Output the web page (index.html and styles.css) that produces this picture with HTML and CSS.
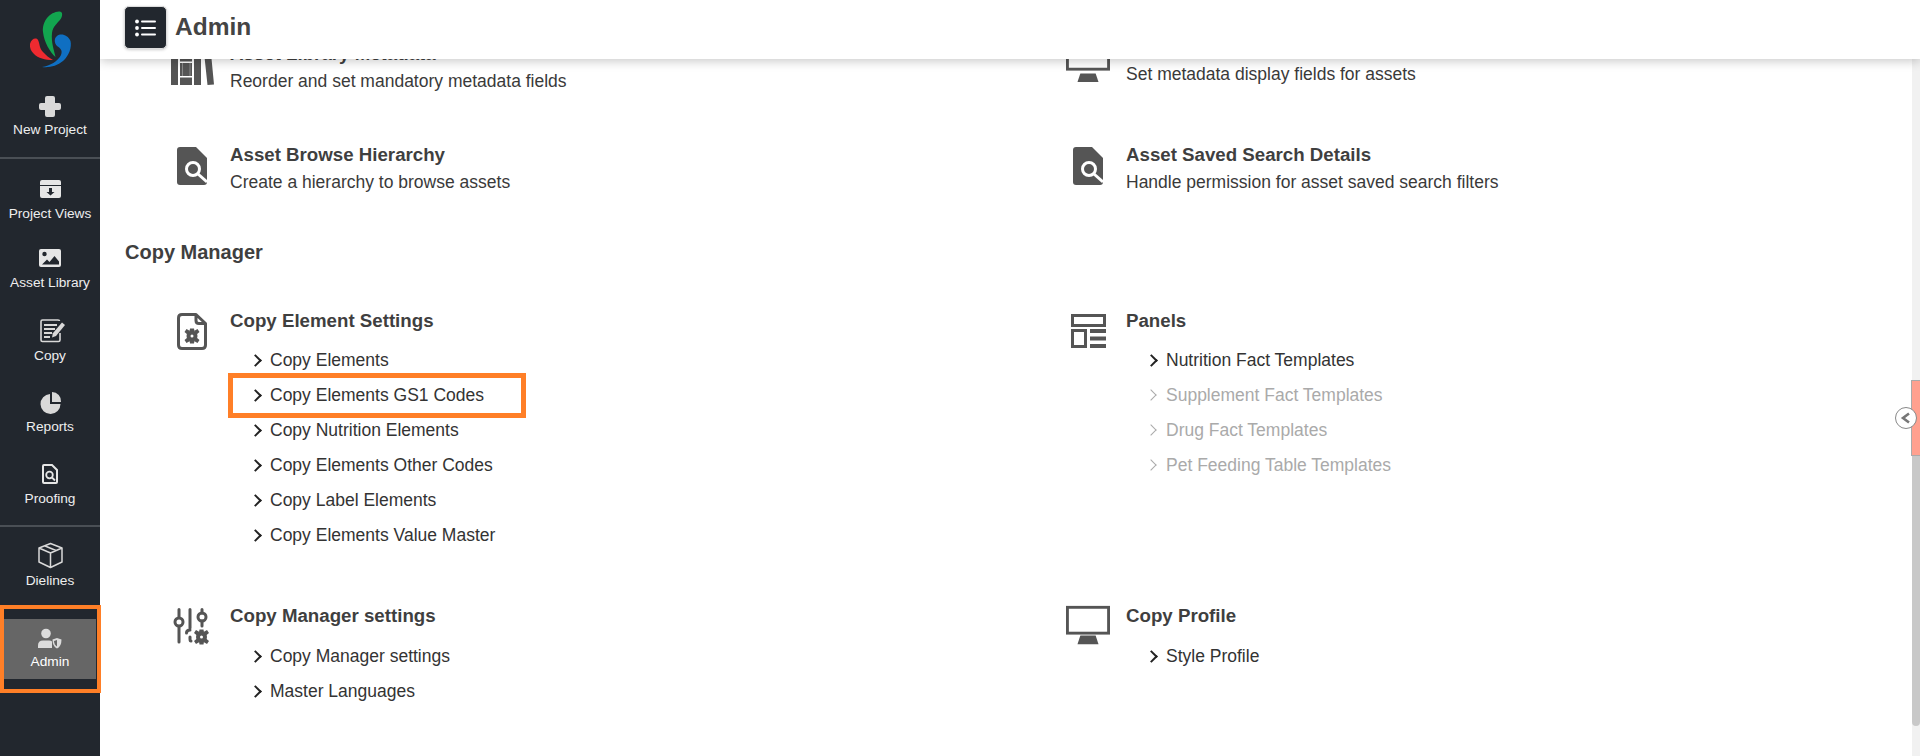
FILE: index.html
```html
<!DOCTYPE html>
<html lang="en">
<head>
<meta charset="utf-8">
<title>Admin</title>
<link rel="stylesheet" href="styles.css">
</head>
<body>
<div class="app">
  <aside class="sidebar">
    <div class="logo">
      <svg width="100" height="80" viewBox="0 0 100 80">
        <path fill="#12a54f" d="M59 11.500C62.500 11 63 15 61 18.500C57 24 53 26 52 33C51 42 54 50 55.500 57C50 52 44 42 43 32C42 21 50 12 59 11.500Z"/>
        <path fill="#ee2a30" d="M30 44C31 39 36 37 38 40C40 44 39 48 43 52C46 55 49 58 53 60C45 60 38 58 34 54C31 51 29.500 48 30 44Z"/>
        <path fill="#0f6fc2" d="M57 36C61 33 68 35 70.500 41C72 47 69 56 63 61C57 66 49 68 42 67C50 66 58 61 61 55C63 50 60 48 57 46C54 43 54 38 57 36Z"/>
      </svg>
    </div>
    <a class="nav nav-new">
      <svg class="nav-icon" viewBox="0 0 32 28"><path fill="#d9d9d9" d="M13 6h6q2 0 2 2v5h4q2 0 2 2v3q0 2-2 2h-4v5q0 2-2 2h-6q-2 0-2-2v-5H7q-2 0-2-2v-3q0-2 2-2h4V8q0-2 2-2z"/></svg>
      <span>New Project</span>
    </a>
    <div class="rule"></div>
    <a class="nav h69">
      <svg class="nav-icon" viewBox="0 0 32 28"><path fill="#e6e6e6" d="M8 6h17q2 0 2 2v3H6V8q0-2 2-2zM6 12h21v10q0 2-2 2H8q-2 0-2-2z"/><path fill="#22272e" d="M15 14h3v4h2.500l-4 3.500-4-3.500H15z"/></svg>
      <span>Project Views</span>
    </a>
    <a class="nav h69">
      <svg class="nav-icon" viewBox="0 0 32 28"><path fill="#e6e6e6" d="M7 6h18q2 0 2 2v14q0 2-2 2H7q-2 0-2-2V8q0-2 2-2z"/><circle cx="10.500" cy="11" r="2.200" fill="#22272e"/><path fill="#22272e" d="M8 21.500l5-5 2.500 2.500 5-6 4.500 5.500v3z"/></svg>
      <span>Asset Library</span>
    </a>
    <a class="nav h73">
      <svg class="nav-icon" viewBox="0 0 32 28"><path fill="none" stroke="#d9d9d9" stroke-width="1.600" d="M26 17v7q0 1.500-1.500 1.500H8.500Q7 25.500 7 24V5.500Q7 4 8.500 4H24q1.500 0 1.500 1"/><path stroke="#d9d9d9" stroke-width="1.800" d="M10 9h13M10 13h11M10 17h8M10 21h6"/><path fill="#d9d9d9" d="M28 6.500l3 2.500-9 11-4 1.500.8-4.200z"/></svg>
      <span>Copy</span>
    </a>
    <a class="nav h71">
      <svg class="nav-icon" viewBox="0 0 32 28"><path fill="#d9d9d9" d="M16 7v10h10.500a10 10 0 1 1-10.500-10z"/><path fill="#d9d9d9" d="M18 5a9 9 0 0 1 9 10h-9z"/></svg>
      <span>Reports</span>
    </a>
    <a class="nav h72">
      <svg class="nav-icon" viewBox="0 0 32 28"><path fill="none" stroke="#e6e6e6" stroke-width="2" d="M10 6h8l5 5v12q0 1-1 1H10q-1 0-1-1V7q0-1 1-1z"/><circle cx="15.500" cy="16" r="3.300" fill="none" stroke="#e6e6e6" stroke-width="1.800"/><path stroke="#e6e6e6" stroke-width="1.800" d="M18 18.500l3 3"/></svg>
      <span>Proofing</span>
    </a>
    <div class="rule rule-second"></div>
    <a class="nav h68">
      <svg class="nav-icon" viewBox="0 0 32 28"><path fill="none" stroke="#d9d9d9" stroke-width="1.500" stroke-linejoin="round" d="M16.500 2.500L28 7v14l-11.500 5.500L5 21V7zM5 7l11.500 5L28 7M16.500 12v14.500M10.500 4.800l11.500 4.700"/></svg>
      <span>Dielines</span>
    </a>
    <div class="admin-slot">
      <a class="nav nav-active">
        <svg class="nav-icon" viewBox="0 0 32 28"><circle cx="12" cy="10.500" r="4.800" fill="#dcdcdc"/><path fill="#dcdcdc" d="M4 25v-2.500q0-5 5-5h6q2 0 3 1v6.500z"/><path fill="#dcdcdc" d="M23 15l4.500 1.500q0 7-4.500 9q-4.500-2-4.500-9z"/><path fill="#666" d="M23 17v6.500q-2.800-1.500-3-5.500z"/></svg>
        <span>Admin</span>
      </a>
      <div class="mark mark-nav"></div>
    </div>
  </aside>

  <main class="main">
    <header class="topbar">
      <button class="menu-btn" type="button" aria-label="Menu">
        <svg width="22" height="18" viewBox="0 0 22 18"><g fill="#fff"><circle cx="2" cy="2.500" r="1.900"/><circle cx="2" cy="9" r="1.900"/><circle cx="2" cy="15.500" r="1.900"/><rect x="6" y="1.500" width="15" height="2" rx="1"/><rect x="6" y="8" width="15" height="2" rx="1"/><rect x="6" y="14.500" width="15" height="2" rx="1"/></g></svg>
      </button>
      <h1>Admin</h1>
    </header>

    <div class="content">
      <div class="grid grid-first">
        <section class="card card-book">
          <div class="card-icon">
            <svg width="44" height="44" viewBox="0 0 44 44"><path fill="#555" d="M1 2h7v42H1zM10 2h12v42H10zM24 2h7v42h-7zM33 2h7l4 41.500-6.500.5z"/><path fill="#fff" d="M10 20.500h12V22H10zM10 35h12v1.500H10z"/><path fill="#8a8a8a" d="M12 22h1v13h-1zM19.500 22h1v13h-1z"/></svg>
          </div>
          <div class="card-body">
            <h3>Asset Library Metadata</h3>
            <p>Reorder and set mandatory metadata fields</p>
          </div>
        </section>
        <section class="card card-book">
          <div class="card-icon">
            <svg width="46" height="42" viewBox="0 0 46 42"><rect x="1.500" y="1.500" width="43" height="27" fill="#fff" stroke="#555" stroke-width="3"/><path fill="#555" d="M12 42l3-9h16l3 9z"/></svg>
          </div>
          <div class="card-body card-body-up">
            <h3>Asset Display Metadata</h3>
            <p>Set metadata display fields for assets</p>
          </div>
        </section>
        <section class="card card-search">
          <div class="card-icon">
            <svg width="30" height="38" viewBox="0 0 30 38"><path fill="#555" d="M3 0h16l11 11v24q0 3-3 3H3q-3 0-3-3V3q0-3 3-3z"/><circle cx="16" cy="22" r="6.500" fill="none" stroke="#fff" stroke-width="3"/><path stroke="#fff" stroke-width="3" d="M21 27l9 8"/></svg>
          </div>
          <div class="card-body">
            <h3>Asset Browse Hierarchy</h3>
            <p>Create a hierarchy to browse assets</p>
          </div>
        </section>
        <section class="card card-search">
          <div class="card-icon">
            <svg width="30" height="38" viewBox="0 0 30 38"><path fill="#555" d="M3 0h16l11 11v24q0 3-3 3H3q-3 0-3-3V3q0-3 3-3z"/><circle cx="16" cy="22" r="6.500" fill="none" stroke="#fff" stroke-width="3"/><path stroke="#fff" stroke-width="3" d="M21 27l9 8"/></svg>
          </div>
          <div class="card-body">
            <h3>Asset Saved Search Details</h3>
            <p>Handle permission for asset saved search filters</p>
          </div>
        </section>
      </div>

      <h2>Copy Manager</h2>

      <div class="grid grid-copy">
        <section class="card card-tall">
          <div class="card-icon">
            <svg width="30" height="37" viewBox="0 0 30 37"><path fill="none" stroke="#555" stroke-width="3" stroke-linejoin="round" d="M5 1.500h14v6q0 3 3 3h6.500V32q0 3.500-3.500 3.500H5q-3.500 0-3.500-3.500V5q0-3.500 3.500-3.500zM19 1.500l9.500 9"/><g fill="#555"><circle cx="15" cy="23" r="5.500"/><path d="M13 15.500h4l.5 3h-5zM13 30.500h4l.5-3h-5zM7.500 19l2-3 3.500 2-2.500 3.500zM22.500 27l-2 3-3.500-2 2.500-3.500zM7.500 27l2 3 3.500-2-2.500-3.500zM22.500 19l-2-3-3.500 2 2.500 3.500z"/></g><circle cx="15" cy="23" r="1.500" fill="#fff"/></svg>
          </div>
          <div class="card-body">
            <h3>Copy Element Settings</h3>
            <ul>
              <li>Copy Elements</li>
              <li class="marked">Copy Elements GS1 Codes<div class="mark mark-link"></div></li>
              <li>Copy Nutrition Elements</li>
              <li>Copy Elements Other Codes</li>
              <li>Copy Label Elements</li>
              <li>Copy Elements Value Master</li>
            </ul>
          </div>
        </section>
        <section class="card card-tall">
          <div class="card-icon">
            <svg width="35" height="34" viewBox="0 0 35 34"><g fill="none" stroke="#555" stroke-width="3"><rect x="1.500" y="1.500" width="32" height="10"/><rect x="1.500" y="16.500" width="13" height="16"/></g><path fill="#555" d="M19 15h16v4H19zM19 22.500h16v4H19zM19 30h16v4H19z"/></svg>
          </div>
          <div class="card-body">
            <h3>Panels</h3>
            <ul>
              <li>Nutrition Fact Templates</li>
              <li class="off">Supplement Fact Templates</li>
              <li class="off">Drug Fact Templates</li>
              <li class="off">Pet Feeding Table Templates</li>
            </ul>
          </div>
        </section>
        <section class="card card-low">
          <div class="card-icon">
            <svg width="38" height="38" viewBox="0 0 38 38"><g fill="none" stroke="#555" stroke-width="3" stroke-linecap="round"><path d="M6 1.500v8M6 19v15"/><circle cx="6" cy="14" r="4"/><path d="M17 1.500V20M13.500 25q0-3 3.500-3M17 29v2q0 2 1 2"/><circle cx="29" cy="9" r="4"/><path d="M29 1.500V5M29 13v5"/></g><g fill="#555"><circle cx="28.500" cy="29" r="5.500"/><path d="M26.500 21.500h4l.5 3h-5zM26.500 36.500h4l.5-3h-5zM21 25l2-3 3.500 2-2.500 3.500zM36 33l-2 3-3.500-2 2.500-3.500zM21 33l2 3 3.500-2-2.500-3.500zM36 25l-2-3-3.500 2 2.500 3.500z"/></g><circle cx="28.500" cy="29" r="1.500" fill="#fff"/></svg>
          </div>
          <div class="card-body">
            <h3>Copy Manager settings</h3>
            <ul>
              <li>Copy Manager settings</li>
              <li>Master Languages</li>
            </ul>
          </div>
        </section>
        <section class="card card-low">
          <div class="card-icon">
            <svg width="46" height="41" viewBox="0 0 46 41"><rect x="1.500" y="1.500" width="43" height="27" fill="#fff" stroke="#555" stroke-width="3"/><path fill="#555" d="M12 40l3-9h16l3 9z"/></svg>
          </div>
          <div class="card-body">
            <h3>Copy Profile</h3>
            <ul>
              <li>Style Profile</li>
            </ul>
          </div>
        </section>
      </div>
    </div>

    <div class="scroll-track"><div class="scroll-thumb"></div></div>
    <div class="scroll-mark"></div>
    <button class="collapse" type="button" aria-label="Collapse">
      <svg width="12" height="12" viewBox="0 0 12 12"><path fill="none" stroke="#777" stroke-width="2.600" d="M9 1.500L3 6l6 4.500"/></svg>
    </button>
  </main>
</div>
</body>
</html>
```
FILE: styles.css
```css
* { box-sizing: border-box; }
html, body { margin: 0; height: 100%; overflow: hidden; }
body { font-family: "Liberation Sans", Arial, sans-serif; color: #333; background: #fff; }
.app { display: flex; height: 100vh; }

/* sidebar */
.sidebar { width: 100px; flex: none; background: #22272e; display: flex; flex-direction: column; position: relative; z-index: 3; }
.logo { height: 80px; }
.logo svg { display: block; }
.nav { display: flex; flex-direction: column; align-items: center; justify-content: flex-end; padding-bottom: 6px; color: #eee; font-size: 13.700px; line-height: 16px; }
.nav-icon { width: 32px; height: 28px; margin-bottom: 4px; flex: none; display: block; }
.nav-new { height: 64px; }
.rule { height: 2px; background: #4a4f55; margin-top: 13px; }
.rule-second { margin-top: 12px; }
.h68 { height: 68px; }
.h69 { height: 69px; }
.h71 { height: 71px; }
.h72 { height: 72px; }
.h73 { height: 73px; }
.admin-slot { position: relative; margin: 10px 0 0; height: 88px; padding: 14px 4px 0; }
.nav-active { background: #666; height: 60px; padding-bottom: 9px; color: #fff; }
.nav-active .nav-icon { margin-bottom: 3px; }
.mark { position: absolute; border: 4px solid #ff7f27; pointer-events: none; }
.mark-nav { left: 0; top: 0; width: 101px; height: 88px; }

/* main */
.main { flex: 1; min-width: 0; position: relative; overflow: hidden; }
.topbar { position: absolute; left: 0; right: 0; top: 0; height: 59px; background: #fff; box-shadow: 0 2px 10px rgba(0,0,0,.22); display: flex; align-items: center; padding-left: 24px; z-index: 2; }
.menu-btn { width: 43px; height: 43px; margin: -4px 0 0; padding: 0; border: 1px solid #ddd; border-radius: 5px; background: #22272e; display: flex; align-items: center; justify-content: center; box-shadow: 0 1px 3px rgba(0,0,0,.2); }
.topbar h1 { margin: -5px 0 0 8px; font-size: 24.500px; line-height: 30px; font-weight: 700; color: #444; }

.content { padding: 43px 0 0 25px; }
h2 { margin: 25px 0 0; font-size: 20px; line-height: 22px; font-weight: 700; color: #3f3f3f; }
.grid { display: grid; grid-template-columns: 896px 1fr; padding-left: 45px; }
.grid-copy { margin-top: 47px; }
.card { display: flex; }
.card-book { height: 101px; }
.card-search { height: 72px; }
.card-tall { height: 295px; }
.card-icon { width: 44px; margin-right: 16px; flex: none; display: flex; justify-content: center; align-items: flex-start; }
.card-book .card-icon { margin-top: -2px; }
.card-search .card-icon { margin-top: 3px; }
.card-tall .card-icon { margin-top: 2px; height: 38px; align-items: center; }
.card-low .card-icon { height: 41px; align-items: flex-end; }
.card-body { min-width: 0; }
.card-body-up { margin-top: -7px; }
h3 { margin: 0; font-size: 18.700px; line-height: 22px; font-weight: 700; color: #3f3f3f; }
p { margin: 5px 0 0; font-size: 17.500px; line-height: 22px; color: #3a3a3a; }
ul { list-style: none; margin: 11px 0 0; padding: 0 0 0 40px; }
.card-low ul { margin-top: 12px; }
li { position: relative; height: 35px; line-height: 35px; font-size: 17.500px; color: #333; }
li::before { content: ""; position: absolute; left: -19px; top: 13px; width: 7px; height: 7px; border-top: 2px solid #222; border-right: 2px solid #222; transform: rotate(45deg); }
li.off { color: #aaa; }
li.off::before { border-color: #aaa; border-width: 1.500px 1.500px 0 0; }
.mark-link { left: -42px; top: -5px; width: 298px; height: 45px; border-width: 5px; }

/* scroll */
.scroll-track { position: absolute; top: 59px; bottom: 0; right: 0; width: 8px; background: #f1f1f1; }
.scroll-thumb { position: absolute; left: 0; right: 0; top: 321px; height: 346px; background: #c8c8c8; border-radius: 0 0 4px 4px; }
.scroll-mark { position: absolute; right: 0; top: 380px; width: 9px; height: 76px; background: #ffa08f; border: 1px solid #aaa; border-right: 0; }
.collapse { position: absolute; top: 407px; right: 3px; width: 22px; height: 22px; padding: 0; border: 1px solid #888; border-radius: 50%; background: #fff; display: flex; align-items: center; justify-content: center; }
```
